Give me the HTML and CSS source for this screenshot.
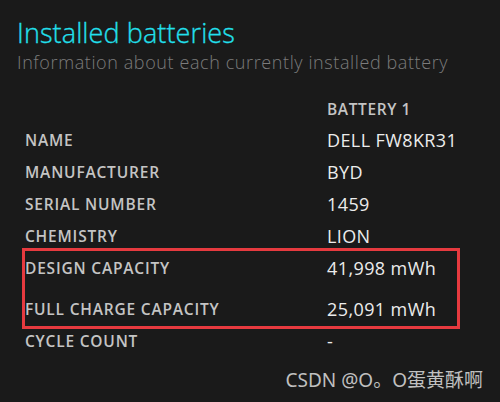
FILE: index.html
```html
<!DOCTYPE html>
<html>
<head>
<meta charset="utf-8">
<link rel="stylesheet" href="styles.css">
</head>
<body>
<div class="page">
  <h1 class="title">Installed batteries</h1>
  <p class="subtitle">Information about each currently installed battery</p>
  <div class="table">
    <div class="row head"><span class="label"></span><span class="col-head">BATTERY 1</span></div>
    <div class="row"><span class="label">NAME</span><span class="value">DELL FW8KR31</span></div>
    <div class="row"><span class="label">MANUFACTURER</span><span class="value">BYD</span></div>
    <div class="row"><span class="label">SERIAL NUMBER</span><span class="value">1459</span></div>
    <div class="row"><span class="label">CHEMISTRY</span><span class="value">LION</span></div>
    <div class="row"><span class="label">DESIGN CAPACITY</span><span class="value">41,998 mWh</span></div>
    <div class="row spaced"><span class="label">FULL CHARGE CAPACITY</span><span class="value">25,091 mWh</span></div>
    <div class="row"><span class="label">CYCLE COUNT</span><span class="value">-</span></div>
  </div>
  <div class="highlight"></div>
  <div class="watermark">CSDN @O。O蛋黄酥啊</div>
</div>
</body>
</html>
```
FILE: styles.css
```css
html, body {
  margin: 0;
  padding: 0;
  background: #1a1a1a;
}
.page {
  position: relative;
  width: 500px;
  height: 402px;
  overflow: hidden;
  font-family: "Open Sans", "Noto Sans", sans-serif;
  padding: 17px 0 0 17px;
  box-sizing: border-box;
}
.title {
  margin: 0;
  font-family: "Open Sans", sans-serif;
  font-weight: 300;
  font-size: 27px;
  line-height: 32px;
  color: #22e0ee;
  letter-spacing: 0.1px;
  -webkit-text-stroke: 0.3px #22e0ee;
}
.subtitle {
  margin: 0;
  font-weight: 300;
  font-size: 18px;
  line-height: 26px;
  color: #7c7c7c;
  letter-spacing: 0.6px;
}
.table {
  margin-top: 19px;
  padding-left: 8px;
}
.row {
  display: grid;
  grid-template-columns: 302px 1fr;
  height: 32px;
  align-items: center;
}
.row.head {
  height: 30px;
}
.row.spaced {
  height: 41px;
  padding-top: 9px;
  box-sizing: border-box;
}
.label {
  font-weight: 600;
  font-size: 15.5px;
  color: #c4c4c4;
  letter-spacing: 0.8px;
}
.col-head {
  font-weight: 600;
  font-size: 15.5px;
  color: #c4c4c4;
  letter-spacing: 0.6px;
}
.value {
  font-weight: 400;
  font-size: 18px;
  color: #ececec;
  letter-spacing: 0.4px;
}
.highlight {
  position: absolute;
  left: 22px;
  top: 248px;
  width: 438px;
  height: 81px;
  border: 3px solid #e63a3f;
  box-sizing: border-box;
}
.watermark {
  position: absolute;
  right: 17px;
  bottom: 9px;
  font-family: "Noto Sans", "Noto Sans CJK SC", sans-serif;
  font-size: 19px;
  color: #c0c0c0;
}
```
